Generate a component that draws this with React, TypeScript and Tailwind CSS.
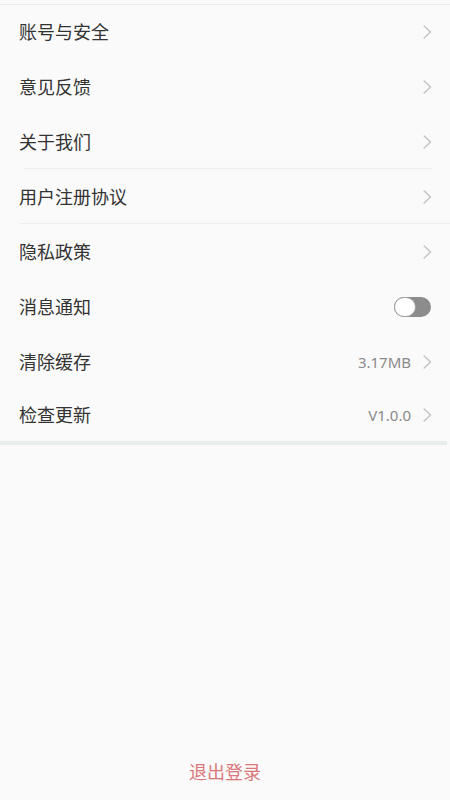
import React from "react";

const Chevron = () => (
  <svg width="9" height="14" viewBox="0 0 9 14" className="shrink-0">
    <path d="M1.2 1 L7.5 7 L1.2 13" fill="none" stroke="#c4c4c4" strokeWidth="1.5" strokeLinecap="round" strokeLinejoin="round" />
  </svg>
);

type Row = { label: string; value?: string; toggle?: boolean; divider?: string; h?: string };

const rows: Row[] = [
  { label: "账号与安全" },
  { label: "意见反馈" },
  { label: "关于我们", divider: "left-[24px] right-[18px]" },
  { label: "用户注册协议", divider: "left-[20px] right-0" },
  { label: "隐私政策" },
  { label: "消息通知", toggle: true },
  { label: "清除缓存", value: "3.17MB" },
  { label: "检查更新", value: "V1.0.0", h: "h-[52px]" },
];

export default function App() {
  return (
    <div
      className="w-[450px] h-[800px] bg-[#fafafa] flex flex-col"
      style={{ fontFamily: '"Noto Sans", "Noto Sans CJK SC", sans-serif' }}
    >
      <div className="h-[4px]" />
      <div className="h-px bg-[#ececec]" />
      {rows.map((r, i) => (
        <div
          key={r.label}
          className={`relative flex items-center pl-[19px] pr-[18px] ${r.h ?? "h-[55px]"} ${i === 0 ? "-mt-[1px]" : ""}`}
        >
          <span className="flex-1 text-[18px] leading-[24px] text-[#333333]">{r.label}</span>
          {r.toggle ? (
            <div className="relative w-[37px] h-[20px] mr-[1px] rounded-full bg-[#8c8c8c]">
              <div className="absolute left-0 top-0 w-[22px] h-[20px] rounded-full bg-white border border-[#a0a0a0]" />
            </div>
          ) : (
            <div className="flex items-center gap-[12px]">
              {r.value && <span className="text-[15px] leading-[20px] text-[#8a8a8a]">{r.value}</span>}
              <Chevron />
            </div>
          )}
          {r.divider && <div className={`absolute bottom-0 h-px bg-[#eceeee] ${r.divider}`} />}
        </div>
      ))}
      <div className="h-[4px] mr-[3px] bg-[#e8eeec]" />
      <div className="flex-1" />
      <div className="flex justify-center pb-[16px]">
        <span className="text-[18px] leading-[24px] text-[#d9787b]">退出登录</span>
      </div>
    </div>
  );
}
